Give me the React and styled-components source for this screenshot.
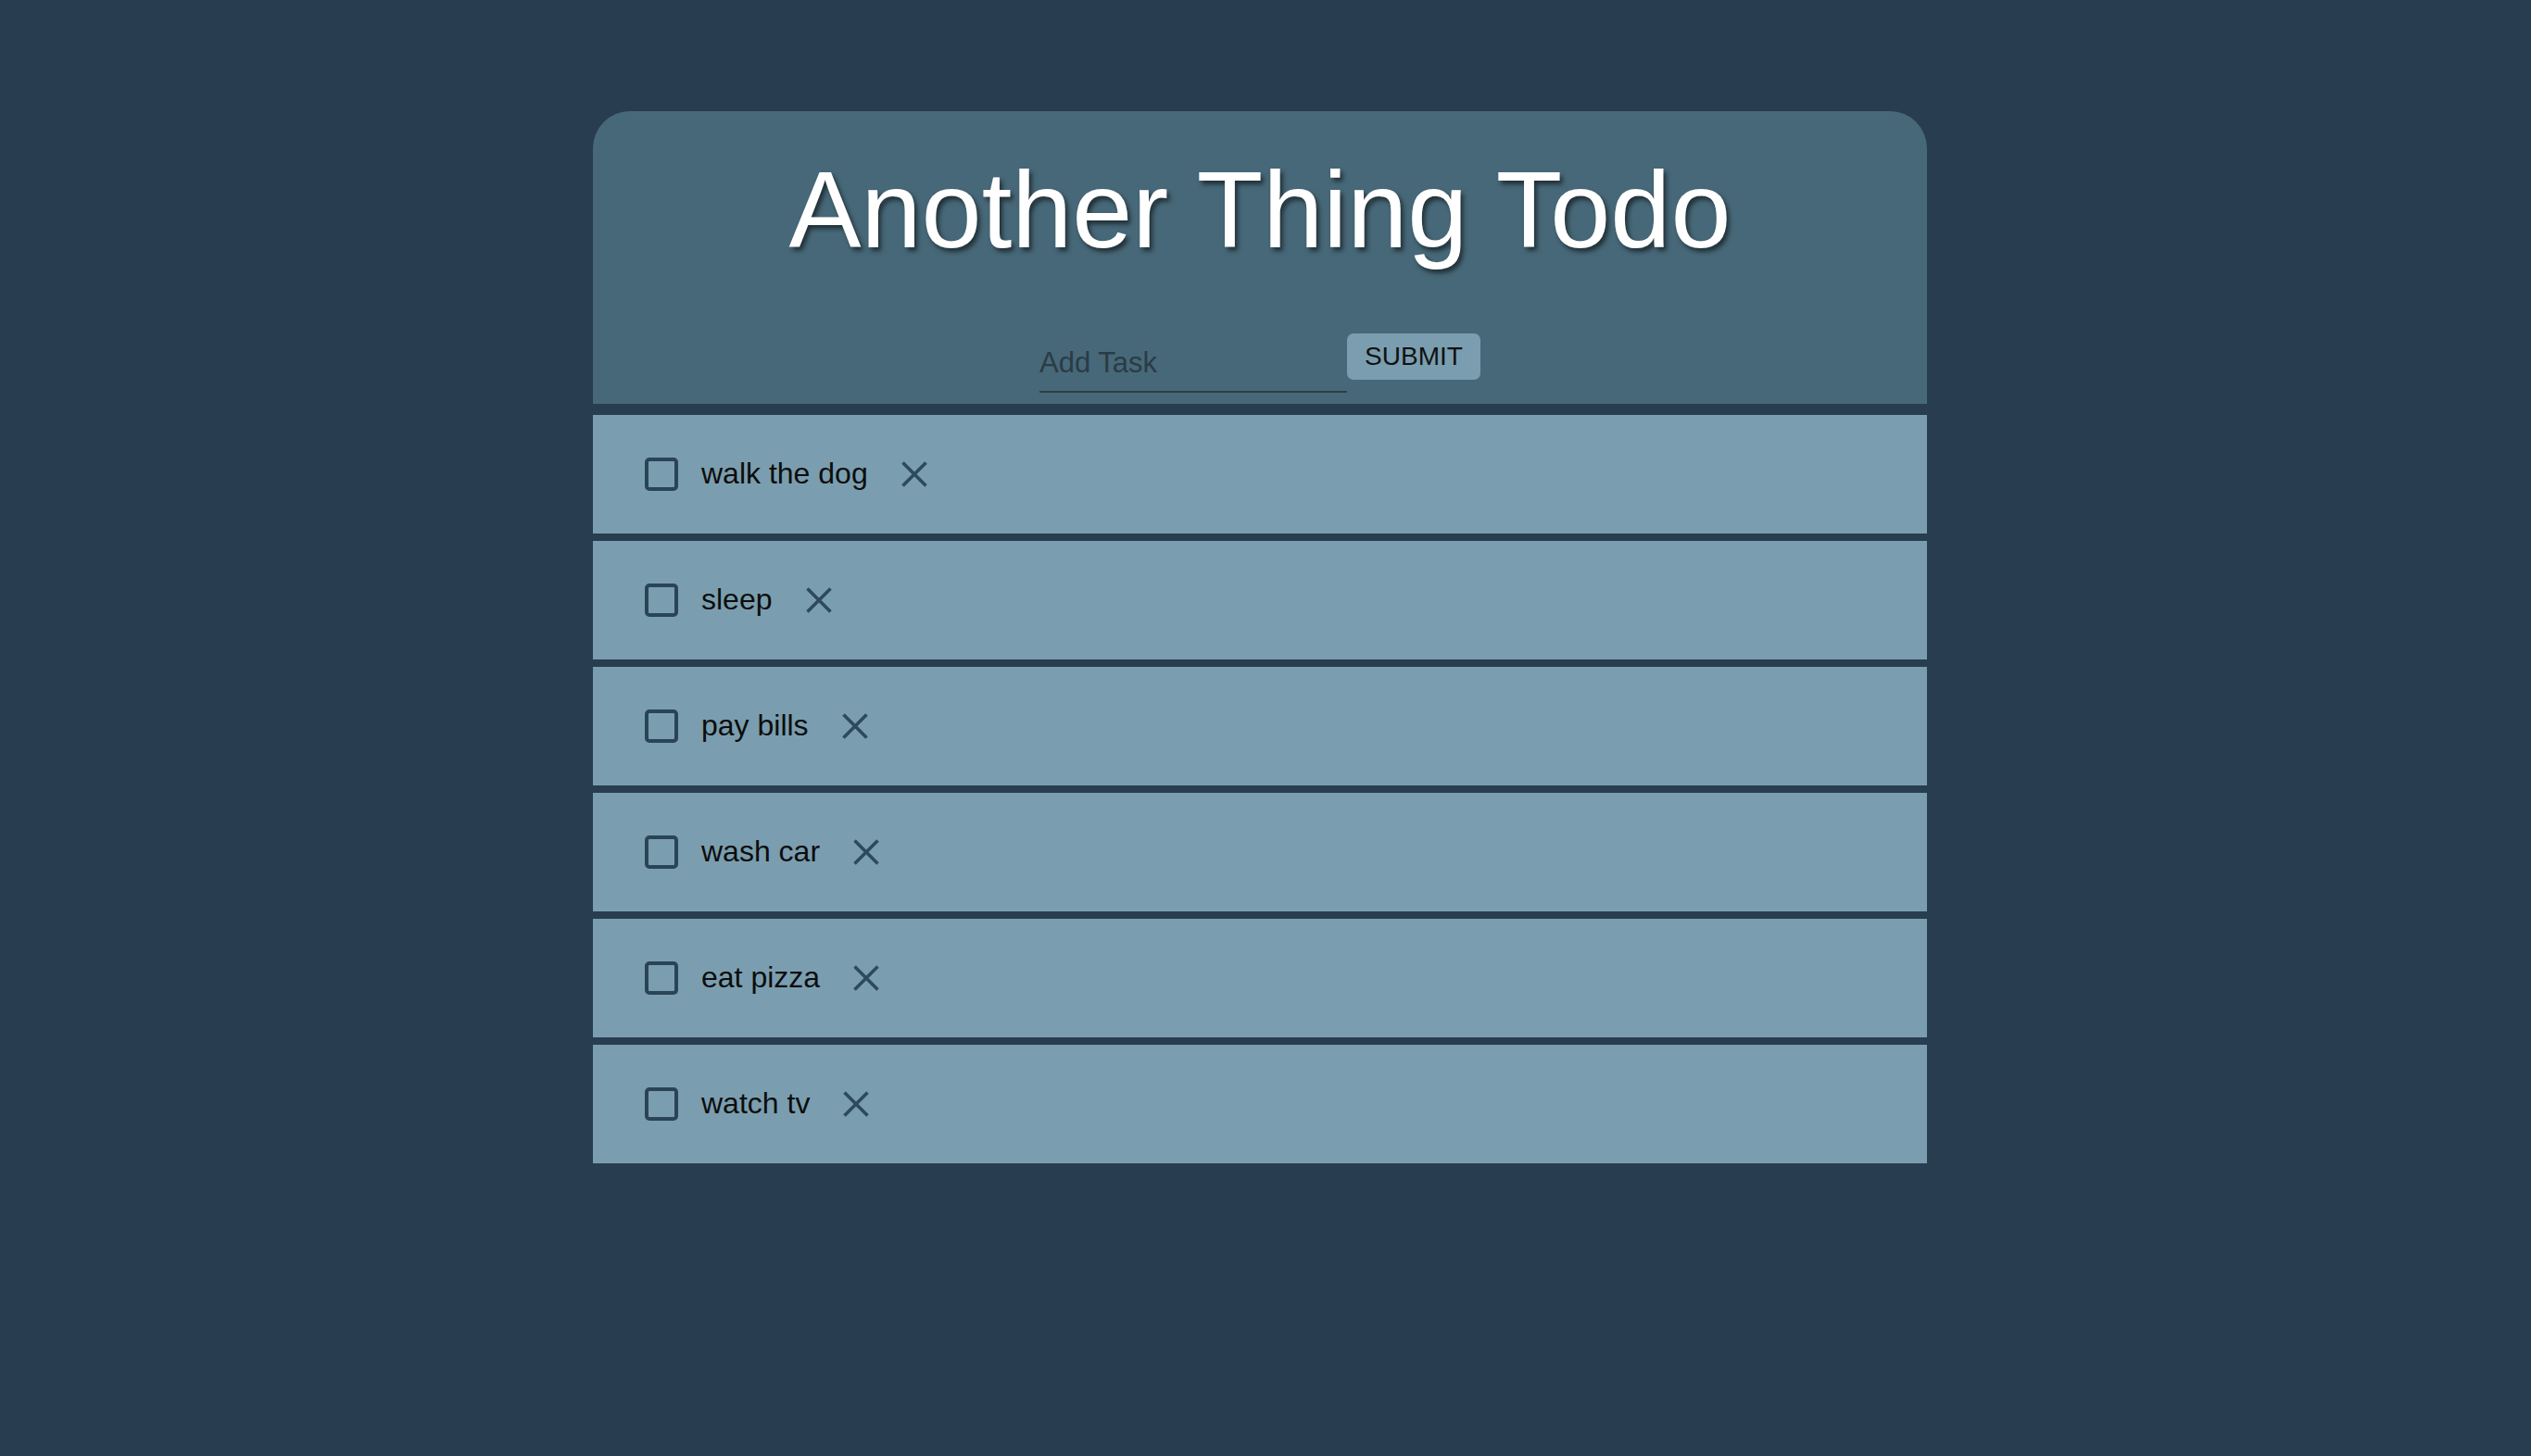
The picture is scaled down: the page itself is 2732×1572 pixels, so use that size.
import styled, { createGlobalStyle } from "styled-components";

const GlobalStyle = createGlobalStyle`
  html, body {
    margin: 0;
    padding: 0;
    background-color: #283d4f;
    font-family: "Liberation Sans", Arial, sans-serif;
  }
`;

const Page = styled.div`
  display: flex;
  justify-content: center;
  padding: 120px 12px 0 0;
`;

const Card = styled.div`
  width: 1440px;
  display: flex;
  flex-direction: column;
`;

const Header = styled.header`
  background-color: #476878;
  border-radius: 40px 40px 0 0;
  padding: 40px 0 12px;
  display: flex;
  flex-direction: column;
  align-items: center;
`;

const Title = styled.h1`
  margin: 0;
  font-size: 117px;
  font-weight: 400;
  line-height: 1.14;
  color: #fff;
  text-shadow: 3px 4px 5px rgba(0, 0, 0, 0.55);
`;

const Form = styled.form`
  display: flex;
  align-items: flex-start;
  margin-top: 67px;
`;

const Input = styled.input`
  width: 332px;
  margin-top: 8px;
  padding: 7px 0 13px;
  line-height: 34px;
  font-size: 31px;
  font-family: "Liberation Sans", Arial, sans-serif;
  background: transparent;
  border: none;
  border-bottom: 2px solid #2e3f4a;
  color: #1d2a33;
  outline: none;
  &::placeholder {
    color: #2a3c47;
  }
`;

const Button = styled.button`
  width: 144px;
  height: 50px;
  border: none;
  border-radius: 7px;
  background-color: #7a9eaf;
  color: #111;
  font-family: "Liberation Sans", Arial, sans-serif;
  font-size: 28px;
  text-transform: uppercase;
  cursor: pointer;
  padding: 0;
`;

const List = styled.ul`
  list-style: none;
  margin: 12px 0 0;
  padding: 0;
  display: flex;
  flex-direction: column;
  gap: 8px;
`;

const Row = styled.li`
  height: 128px;
  background-color: #7a9eaf;
  display: flex;
  align-items: center;
  padding-left: 56px;
`;

const Box = styled.span`
  width: 36px;
  height: 36px;
  box-sizing: border-box;
  border: 4px solid #2a4456;
  border-radius: 5px;
  flex-shrink: 0;
`;

const Label = styled.span`
  margin-left: 25px;
  margin-bottom: 2px;
  font-size: 32px;
  color: #0d0d0d;
`;

const Remove = styled.button`
  margin-left: 36px;
  width: 28px;
  height: 28px;
  padding: 0;
  border: none;
  background: none;
  cursor: pointer;
  display: flex;
  svg {
    display: block;
  }
`;

const tasks = ["walk the dog", "sleep", "pay bills", "wash car", "eat pizza", "watch tv"];

const CloseIcon = () => (
  <svg width="28" height="28" viewBox="0 0 28 28">
    <path d="M1.5 1.5 L26.5 26.5 M26.5 1.5 L1.5 26.5" stroke="#2d4a5c" strokeWidth="3.6" fill="none" />
  </svg>
);

const App = () => {
  return (
    <>
      <GlobalStyle />
      <Page>
        <Card>
          <Header>
            <Title>Another Thing Todo</Title>
            <Form onSubmit={(e) => e.preventDefault()}>
              <Input placeholder="Add Task" />
              <Button type="submit">Submit</Button>
            </Form>
          </Header>
          <List>
            {tasks.map((t) => (
              <Row key={t}>
                <Box />
                <Label>{t}</Label>
                <Remove aria-label="remove">
                  <CloseIcon />
                </Remove>
              </Row>
            ))}
          </List>
        </Card>
      </Page>
    </>
  );
};

export default App;
